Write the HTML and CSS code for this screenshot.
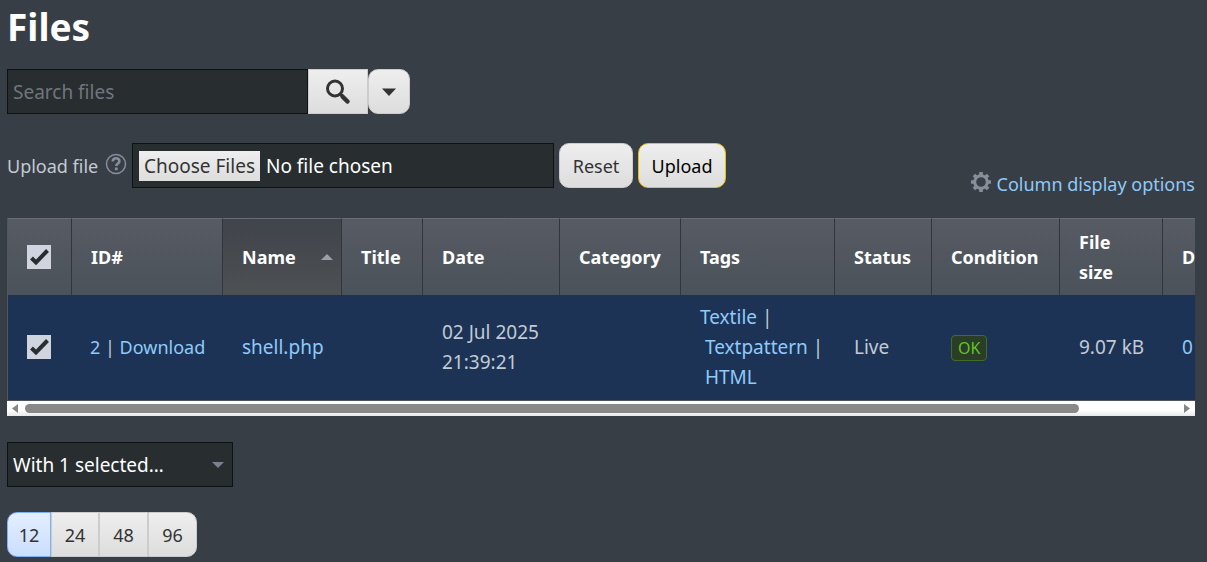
FILE: index.html
```html
<!DOCTYPE html>
<html lang="en">
<head>
<meta charset="utf-8">
<title>Files</title>
<link rel="stylesheet" href="styles.css">
</head>
<body>
<main class="page">
  <h1 class="title">Files</h1>

  <form class="search">
    <input class="field search-field" type="search" placeholder="Search files" aria-label="Search files">
    <button class="button search-go" type="button" aria-label="Search">
      <svg width="26" height="26" viewBox="0 0 26 26" fill="none" stroke="#333"><circle cx="10" cy="9.500" r="7.500" stroke-width="3"/><path d="M15.500 15l1.500 1.500" stroke-width="3"/><path d="M17.500 17.500l5 5" stroke-width="4.500" stroke-linecap="round"/></svg>
    </button>
    <button class="button search-menu" type="button" aria-label="Search options">
      <svg width="14" height="8" viewBox="0 0 14 8"><path d="M0 .5h14L7 8z" fill="#333"/></svg>
    </button>
  </form>

  <div class="toolbar">
    <form class="upload">
      <label class="upload-label" for="file">Upload file</label>
      <a class="help" href="#help" aria-label="Help">
        <svg width="22" height="22" viewBox="0 0 22 22" fill="none" stroke="#858e9c"><circle cx="11" cy="11" r="9.500" stroke-width="1.500"/><path d="M7.700 8.500C7.900 6.300 9.100 5.300 11 5.300c2 0 3.400 1.100 3.400 2.900 0 2.300-3.100 2.300-3.100 4.700" stroke-width="2.600"/><path d="M11.300 14.500v2.700" stroke-width="2.800"/></svg>
      </a>
      <input class="field file-field" id="file" type="file" multiple>
      <button class="button reset" type="reset">Reset</button>
      <button class="button primary" type="button">Upload</button>
    </form>
    <a class="options" href="#columns">
      <svg width="20" height="20" viewBox="0 0 20 20" fill="none" stroke="#858e99"><circle cx="10" cy="10" r="6.300" stroke-width="3"/><path d="M10 0v3M10 17v3M0 10h3M17 10h3M2.900 2.900l2.200 2.200M14.900 14.900l2.200 2.200M2.900 17.100l2.200-2.200M14.900 5.100l2.200-2.200" stroke-width="3.600"/></svg>
      Column display options
    </a>
  </div>

  <div class="listing">
    <div class="viewport">
      <table class="files">
        <colgroup><col class="c-check"><col class="c-id"><col class="c-name"><col class="c-title"><col class="c-date"><col class="c-category"><col class="c-tags"><col class="c-status"><col class="c-condition"><col class="c-size"><col class="c-downloads"></colgroup>
        <thead>
          <tr>
            <th><input class="check" type="checkbox" checked aria-label="Select all"></th>
            <th>ID#</th>
            <th class="sorted"><span class="sort">Name <svg width="12" height="6" viewBox="0 0 12 6"><path d="M0 6l6-6 6 6z" fill="#9a9fa8"/></svg></span></th>
            <th>Title</th>
            <th>Date</th>
            <th>Category</th>
            <th>Tags</th>
            <th>Status</th>
            <th>Condition</th>
            <th>File size</th>
            <th>Downloads</th>
          </tr>
        </thead>
        <tbody>
          <tr>
            <td><input class="check" type="checkbox" checked aria-label="Select shell.php"></td>
            <td class="actions"><a href="#edit">2</a> | <a href="#download">Download</a></td>
            <td><a href="#shell">shell.php</a></td>
            <td></td>
            <td>02 Jul 2025 21:39:21</td>
            <td></td>
            <td><a href="#textile">Textile</a> |<br>&nbsp;<a href="#textpattern">Textpattern</a>&nbsp;|<br>&nbsp;<a href="#html">HTML</a></td>
            <td>Live</td>
            <td><span class="ok">OK</span></td>
            <td>9.07 kB</td>
            <td><a href="#downloads">0</a></td>
          </tr>
        </tbody>
      </table>
    </div>
    <div class="scrollbar">
      <svg width="6" height="9" viewBox="0 0 6 9"><path d="M6 0v9L0 4.500z" fill="#868686"/></svg>
      <div class="track"><div class="thumb"></div></div>
      <svg width="6" height="9" viewBox="0 0 6 9"><path d="M0 0v9l6-4.500z" fill="#868686"/></svg>
    </div>
  </div>

  <select class="field bulk" aria-label="With selected">
    <option>With 1 selected…</option>
  </select>

  <nav class="pages" aria-label="Items per page">
    <button class="button current" type="button">12</button>
    <button class="button" type="button">24</button>
    <button class="button" type="button">48</button>
    <button class="button" type="button">96</button>
  </nav>
</main>
</body>
</html>
```
FILE: styles.css
```css
* { box-sizing: border-box; }
body {
  margin: 0;
  background: #383e46;
  color: #c3cad3;
  font: 18px/30px "Noto Sans", sans-serif;
}
a { color: #8fcaf8; text-decoration: none; }
svg { display: block; flex: none; }
.page { padding: 3px 12px 5px 7px; }
.title { margin: 0 0 18px; font-size: 37px; line-height: 48px; color: #fff; }

.field {
  height: 45px;
  margin: 0;
  border: 1px solid #0f1214;
  border-radius: 0;
  background: #282d30;
  color: #fff;
  font: inherit;
  font-size: 19px;
}
.button {
  height: 45px;
  margin: 0;
  padding: 0;
  border: 1px solid #ccc;
  border-radius: 10px;
  background: linear-gradient(#eee, #ddd);
  color: #333;
  font: inherit;
  display: flex;
  align-items: center;
  justify-content: center;
}

.search { display: flex; }
.search-field { width: 301px; padding: 0 5px; appearance: none; outline: 0; }
.search-field::placeholder { color: #70767d; opacity: 1; }
.search-go { width: 60px; border-radius: 0; }
.search-menu { width: 42px; }

.toolbar {
  display: flex;
  justify-content: space-between;
  align-items: flex-end;
  margin: 29px 0 19px;
  height: 56px;
}
.upload { display: flex; align-items: center; align-self: flex-start; }
.upload-label { width: 98px; white-space: nowrap; }
.help { margin: 0 5px 4px 0; }
.file-field { width: 422px; padding: 7px 6px 6px; margin-right: 5px; }
.file-field::file-selector-button {
  height: 30px;
  margin: 0 6px 0 0;
  padding: 0 5px;
  border: 0;
  background: linear-gradient(#eee, #ddd);
  color: #333;
  font: inherit;
}
.reset { width: 74px; margin-right: 5px; }
.primary { width: 88px; border-color: #f0c000; color: #000; }
.options { display: flex; gap: 6px; white-space: nowrap; }
.options svg { margin-top: 3px; }

.viewport { overflow: hidden; }
.files {
  table-layout: fixed;
  width: 1298px;
  border-collapse: separate;
  border-spacing: 0;
  border-left: 1px solid #50555c;
  border-bottom: 1px solid #50555c;
}
.c-check { width: 63px; }
.c-id { width: 151px; }
.c-name { width: 119px; }
.c-title { width: 81px; }
.c-date { width: 137px; }
.c-category { width: 121px; }
.c-tags { width: 154px; }
.c-status { width: 97px; }
.c-condition { width: 128px; }
.c-size { width: 103px; }
.files th, .files td { text-align: left; vertical-align: middle; padding: 7px 12px 8px 20px; }
.files th {
  padding: 8px 16px 8px 19px;
  border-top: 1px solid #686d75;
  border-left: 1px solid #31363d;
  background: linear-gradient(#575b64, #4b5259);
  color: #fff;
  font-weight: 700;
}
.files th:first-child { border-left: 0; }
.files .sorted { background: linear-gradient(#40444b, #4d5154); padding-right: 8px; }
.files td { background: #1c3356; font-size: 19px; }
.files td:first-child { padding-left: 19px; }
.files .actions { font-size: 18px; padding-left: 19px; }
.sort { display: flex; justify-content: space-between; align-items: center; }
.check {
  appearance: none;
  display: block;
  width: 24px;
  height: 24px;
  margin: 0;
  background: #cfd4de url("data:image/svg+xml,%3Csvg xmlns='http://www.w3.org/2000/svg' viewBox='0 0 24 24'%3E%3Cpath d='M4.500 13l4.500 4.500L20.500 5.500' fill='none' stroke='%23282d30' stroke-width='4'/%3E%3C/svg%3E") center / 24px;
}
.ok {
  display: inline-block;
  padding: 0 6px;
  border: 1px solid #3f6e2a;
  border-radius: 4px;
  background: #2a3d25;
  color: #5fc62b;
  font-size: 16px;
  line-height: 24px;
}

.scrollbar {
  display: flex;
  align-items: center;
  gap: 7px;
  height: 15px;
  padding: 0 5px;
  background: linear-gradient(#fff 60%, #e8e8e8);
}
.track { flex: 1; }
.thumb { width: 91.5%; height: 9px; border-radius: 5px; background: #888; }

.bulk {
  display: block;
  width: 226px;
  margin: 26px 0 25px;
  padding: 0 5px;
  appearance: none;
  background: #282d30 url("data:image/svg+xml,%3Csvg xmlns='http://www.w3.org/2000/svg' viewBox='0 0 12 6'%3E%3Cpath d='M0 0h12L6 6z' fill='%23788292'/%3E%3C/svg%3E") no-repeat right 8px center / 12px 6px;
}
.pages { display: flex; }
.pages .button { border-radius: 0; width: 49px; }
.pages .button:first-child { width: 44px; border-radius: 10px 0 0 10px; }
.pages .button:nth-child(2) { width: 48px; }
.pages .button:last-child { border-radius: 0 10px 10px 0; }
.pages .current { background: linear-gradient(#e4eeff, #cadeff); border-color: #80b0f5; }
```
